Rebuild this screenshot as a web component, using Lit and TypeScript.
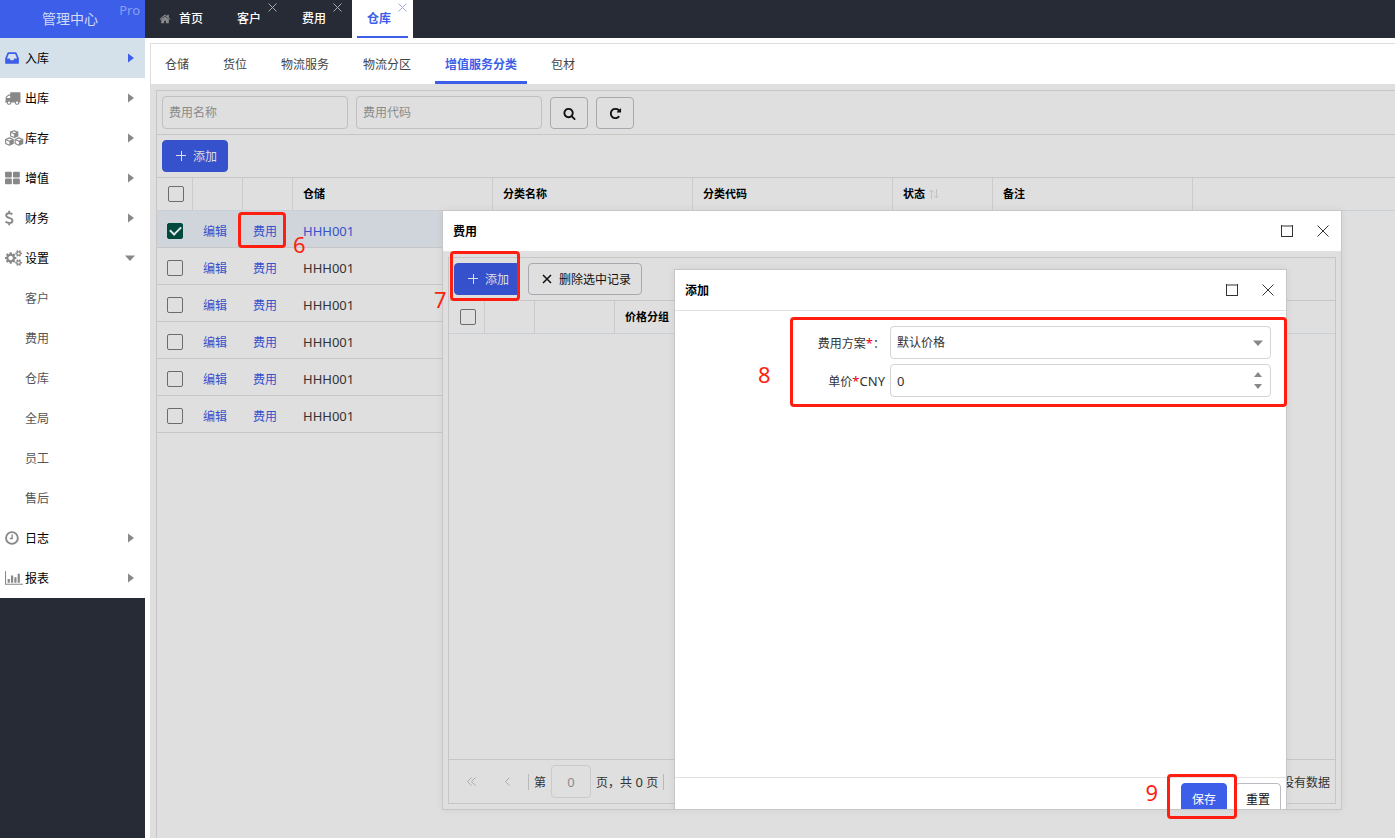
import { LitElement, html, css, svg, nothing } from "lit";
import { customElement } from "lit/decorators.js";
import { classMap } from "lit/directives/class-map.js";

const fa = (d: string, w = 1792) => ({ w, body: svg`<path d=${d} />` });

const ICONS: Record<string, { w: number; x?: number; body: unknown }> = {
  home: fa("M1472 992v480q0 26-19 45t-45 19h-384v-384h-256v384h-384q-26 0-45-19t-19-45v-480q0-1 .5-3t.5-3l575-474 575 474q1 2 1 6zm223-69l-62 74q-8 9-21 11h-3q-13 0-21-7l-692-577-692 577q-12 8-24 7-13-2-21-11l-62-74q-8-10-7-23.5t11-21.5l719-599q32-26 76-26t76 26l244 204v-195q0-14 9-23t23-9h192q14 0 23 9t9 23v408l219 182q10 8 11 21.5t-7 23.5z"),
  inbox: { ...fa("M1151 960h316q-1-3-2.5-8t-2.5-8l-212-496h-708l-212 496q-1 2-2.5 8t-2.5 8h316l95 192h320zm513 30v482q0 26-19 45t-45 19h-1408q-26 0-45-19t-19-45v-482q0-62 25-123l238-552q10-25 36.5-42t52.5-17h832q26 0 52.5 17t36.5 42l238 552q25 61 25 123z"), x: 110 },
  truck: { ...fa("M640 1408q0-52-38-90t-90-38-90 38-38 90 38 90 90 38 90-38 38-90zm-384-512h384v-256h-158q-13 0-22 9l-195 195q-9 9-9 22v30zm1280 512q0-52-38-90t-90-38-90 38-38 90 38 90 90 38 90-38 38-90zm256-1088v1024q0 15-4 26.5t-13.5 18.5-16.5 11.5-23.5 6-22.5 2-25.5 0-22.5-.5q0 106-75 181t-181 75-181-75-75-181h-384q0 106-75 181t-181 75-181-75-75-181h-64q-3 0-22.5.5t-25.5 0-22.5-2-23.5-6-16.5-11.5-13.5-18.5-4-26.5q0-26 19-45t45-19v-320q0-8-.5-35t0-38 2.5-34.5 6.5-37 14-30.5 22.5-30l198-198q19-19 50.5-32t58.5-13h160v-192q0-26 19-45t45-19h1024q26 0 45 19t19 45z"), x: 60 },
  cubes: {
    w: 2160,
    x: 110,
    body: svg`<g stroke="currentColor" stroke-width="130" stroke-linejoin="round" fill="none">
      <path d="M1152 70l410 160v430l-410 190-410-190V230z"/>
      <path d="M610 880l430 180v450l-430 210-430-210v-450z"/>
      <path d="M1694 880l430 180v450l-430 210-430-210v-450z"/></g>
      <path d="M1152 430l410-200v430l-410 190zM610 1260l430-200v450l-430 210zM1694 1260l430-200v450l-430 210z"/>
      <path d="M742 230l410 190 410-190M180 1060l430 190 430-190M1264 1060l430 190 430-190" fill="none" stroke="currentColor" stroke-width="120"/>`,
  },
  grid: {
    w: 1792,
    x: 64,
    body: svg`<rect x="64" y="192" width="768" height="640" rx="110"/><rect x="960" y="192" width="768" height="640" rx="110"/><rect x="64" y="960" width="768" height="640" rx="110"/><rect x="960" y="960" width="768" height="640" rx="110"/>`,
  },
  dollar: {
    w: 1152,
    x: 110,
    body: svg`<path d="M960 480C860 390 720 350 590 350c-200 0-340 90-340 245 0 180 160 235 350 290 210 60 370 130 370 320 0 170-150 270-370 270-170 0-320-70-430-180M590 60v290M590 1475v260" fill="none" stroke="currentColor" stroke-width="215"/>`,
  },
  cogs: fa("M896 896q0-106-75-181t-181-75-181 75-75 181 75 181 181 75 181-75 75-181zm768 512q0-52-38-90t-90-38-90 38-38 90q0 53 37.5 90.5t90.5 37.5 90.5-37.5 37.5-90.5zm0-1024q0-52-38-90t-90-38-90 38-38 90q0 53 37.5 90.5t90.5 37.5 90.5-37.5 37.5-90.5zm-384 421v185q0 10-7 19.5t-16 10.5l-155 24q-11 35-32 76 34 48 90 115 7 11 7 20 0 12-7 19-23 30-82.5 89.5t-78.5 59.5q-11 0-21-7l-115-90q-37 19-77 31-11 108-23 155-7 24-30 24h-186q-11 0-20-7.5t-10-17.5l-23-153q-34-10-75-31l-118 89q-7 7-20 7-11 0-21-8-144-133-144-160 0-9 7-19 10-14 41-53t47-61q-23-44-35-82l-152-24q-10-1-17-9.5t-7-19.5v-185q0-10 7-19.5t16-10.5l155-24q11-35 32-76-34-48-90-115-7-11-7-20 0-12 7-20 22-30 82-89t79-59q11 0 21 7l115 90q34-18 77-32 11-108 23-154 7-24 30-24h186q11 0 20 7.5t10 17.5l23 153q34 10 75 31l118-89q8-7 20-7 11 0 21 8 144 133 144 160 0 8-7 19-12 16-42 54t-45 60q23 48 34 82l152 23q10 2 17 10.5t7 19.5zm640 533v140q0 16-149 31-12 27-30 52 51 113 51 138 0 4-4 7-122 71-124 71-8 0-46-47t-52-68q-20 2-30 2t-30-2q-14 21-52 68t-46 47q-2 0-124-71-4-3-4-7 0-25 51-138-18-25-30-52-149-15-149-31v-140q0-16 149-31 13-29 30-52-51-113-51-138 0-4 4-7 4-2 35-20t59-34 30-16q8 0 46 46.5t52 67.5q20-2 30-2t30 2q51-71 92-112l6-2q4 0 124 70 4 3 4 7 0 25-51 138 17 23 30 52 149 15 149 31zm0-1024v140q0 16-149 31-12 27-30 52 51 113 51 138 0 4-4 7-122 71-124 71-8 0-46-47t-52-68q-20 2-30 2t-30-2q-14 21-52 68t-46 47q-2 0-124-71-4-3-4-7 0-25 51-138-18-25-30-52-149-15-149-31v-140q0-16 149-31 13-29 30-52-51-113-51-138 0-4 4-7 4-2 35-20t59-34 30-16q8 0 46 46.5t52 67.5q20-2 30-2t30 2q51-71 92-112l6-2q4 0 124 70 4 3 4 7 0 25-51 138 17 23 30 52 149 15 149 31z", 1920),
  clock: {
    w: 1664,
    x: 64,
    body: svg`<g fill="none" stroke="currentColor"><circle cx="832" cy="896" r="660" stroke-width="215"/><path d="M860 500v450H600" stroke-width="150"/></g>`,
  },
  chart: {
    w: 2048,
    body: svg`<path d="M0 128h120v1430h1928v120H0zM300 1000h250v440H300zM680 620h250v820H680zM1060 800h250v640h-250zM1440 400h250v1040h-250z"/>`,
  },
  search: fa("M1216 832q0-185-131.5-316.5t-316.5-131.5-316.5 131.5-131.5 316.5 131.5 316.5 316.5 131.5 316.5-131.5 131.5-316.5zm512 832q0 52-38 90t-90 38q-54 0-90-38l-343-342q-179 124-399 124-143 0-273.5-55.5t-225-150-150-225-55.5-273.5 55.5-273.5 150-225 225-150 273.5-55.5 273.5 55.5 225 150 150 225 55.5 273.5q0 220-124 399l343 343q37 37 37 90z"),
  repeat: fa("M1664 256v448q0 26-19 45t-45 19h-448q-42 0-59-40-17-39 14-69l138-138q-148-137-349-137-104 0-198.5 40.5t-163.5 109.5-109.5 163.5-40.5 198.5 40.5 198.5 109.5 163.5 163.5 109.5 198.5 40.5q119 0 225-52t179-147q7-10 23-12 15 0 25 9l137 138q9 8 9.5 20.5t-7.5 22.5q-109 132-264 204.5t-327 72.5q-156 0-298-61t-245-164-164-245-61-298 61-298 164-245 245-164 298-61q147 0 284.5 55.5t244.5 156.5l130-129q29-31 70-14 39 17 39 59z"),
};

const icon = (name: string, size: number) => {
  const i = ICONS[name];
  return html`<svg
    class="icon"
    viewBox="${i.x ?? 0} 0 ${i.w} 1792"
    width=${Math.round((size * i.w) / 1792)}
    height=${size}
    fill="currentColor"
    aria-hidden="true"
  >${i.body}</svg>`;
};

const line = (d: string, size: number, width = 1) => html`<svg
  class="icon"
  viewBox="0 0 ${size} ${size}"
  width=${size}
  height=${size}
  fill="none"
  stroke="currentColor"
  stroke-width=${width}
  aria-hidden="true"
><path d=${d} /></svg>`;

const cross = (size: number, width = 1) =>
  line(`M.5 .5L${size - 0.5} ${size - 0.5}M${size - 0.5} .5L.5 ${size - 0.5}`, size, width);
const plus = () => line("M5.5 0V10M0 4.5H10", 10);
const square = () => line("M0 1H12M.5 0V12M11.5 0V12M0 11.5H12", 12);

const NAV = [
  { label: "入库", icon: "inbox", active: true },
  { label: "出库", icon: "truck" },
  { label: "库存", icon: "cubes" },
  { label: "增值", icon: "grid" },
  { label: "财务", icon: "dollar" },
  { label: "设置", icon: "cogs", children: ["客户", "费用", "仓库", "全局", "员工", "售后"] },
  { label: "日志", icon: "clock" },
  { label: "报表", icon: "chart" },
];
const TABS = ["客户", "费用", "仓库"];
const SUBTABS = ["仓储", "货位", "物流服务", "物流分区", "增值服务分类", "包材"];
const ROWS = ["HHH001", "HHH001", "HHH001", "HHH001", "HHH001", "HHH001"];

@customElement("app-root")
export class AppRoot extends LitElement {
  static styles = css`
    :host {
      display: flex;
      min-height: 100vh;
      position: relative;
      overflow: hidden;
      background: #fff;
      color: #333;
      font: 12px/20px "Noto Sans", "Noto Sans CJK SC", sans-serif;
    }
    * { box-sizing: border-box; }
    a { color: inherit; text-decoration: none; }
    button, input, select { font: inherit; color: inherit; margin: 0; }
    button { padding: 0; border: 0; background: none; display: inline-flex; align-items: center; justify-content: center; }
    .icon { display: block; flex: none; }

    .side { flex: 0 0 145px; background: #262b36; }
    .brand {
      height: 38px; background: #3c5ee8; color: #d3dbf9; position: relative;
      display: flex; align-items: center; padding-left: 42px; font-size: 14px;
    }
    .pro { position: absolute; top: 0; right: 5px; font-size: 13px; color: #8b9ff1; }
    .nav { background: #fff; }
    .nav-item {
      height: 40px; display: grid; grid-template-columns: 20px 1fr 10px; align-items: center;
      padding: 0 10px 0 5px; color: #000;
    }
    .nav-item span { padding-top: 2px; }
    .nav-item .icon { color: #888; }
    .nav-item .icon:last-child { justify-self: end; }
    .nav-item.active { background: #d5e1ea; }
    .nav-item.active .icon { color: #3c5ee8; }
    .nav-sub { height: 40px; display: flex; align-items: center; padding: 2px 0 0 25px; color: #555; }

    .main { flex: 1; min-width: 0; display: flex; flex-direction: column; }
    .tabs { height: 38px; background: #262b36; display: flex; color: #fff; font-weight: 500; }
    .tab { position: relative; display: flex; align-items: center; padding: 0 22px 0 15px; margin-right: 4px; }
    .tab.home { padding: 0 15px 0 14px; gap: 8px; }
    .tab.home .icon { color: #888; }
    .tab.active { background: #fff; color: #3c5ee8; font-weight: 700; }
    .tab.active::after { content: ""; position: absolute; left: 5px; right: 5px; bottom: 0; height: 2px; background: #3c5ee8; }
    .tab-close { position: absolute; top: 3px; right: 6px; color: #aaa; }
    .tab.active .tab-close { color: #a3a5ea; }

    .page { flex: 1; margin: 5px 0 0 5px; border: solid #ddd; border-width: 1px 0 0 1px; display: flex; flex-direction: column; }
    .subtabs { height: 40px; display: flex; gap: 14px; padding-left: 4px; color: #444; }
    .subtab { display: flex; align-items: center; padding: 2px 10px 0; border: solid transparent; border-width: 3px 0; }
    .subtab.active { color: #3c5ee8; font-weight: 700; border-bottom-color: #3c5ee8; }
    .content { flex: 1; background: #dfdfdf; padding: 6px 0 0 5px; display: flex; }
    .panel { flex: 1; min-width: 0; position: relative; border: solid #c6c6c6; border-width: 1px 0 0 1px; }
    .toolbar { display: flex; align-items: flex-end; gap: 8px; padding: 5px; border-bottom: 1px solid #c6c6c6; }
    .filter {
      width: 186px; height: 33px; border: 1px solid #c0c0c0; border-radius: 4px; background: none; padding: 0 6px; outline: 0;
    }
    .filter::placeholder { color: #8b8b8b; opacity: 1; }
    .btn { height: 32px; border: 1px solid #a7a9ae; border-radius: 4px; color: #111; gap: 7px; padding: 0 10px 0 13px; }
    .btn span { padding-top: 2px; }
    .btn.tool { width: 38px; padding: 0; }
    .btn.add { background: #3551cb; border-color: #3551cb; color: #dfdfdf; }
    .btn.save, .btn.reset { padding: 0 10px; }
    .btn.save { background: #3c5ee8; border-color: #3c5ee8; color: #fff; }
    .btn.reset { background: #fff; border-color: #b9bcc2; }

    table { width: 100%; table-layout: fixed; border-collapse: separate; border-spacing: 0; }
    th { height: 33px; padding: 0 10px; text-align: left; font-size: 11px; color: #000; border: solid #cbcbcb; border-width: 0 1px 1px 0; border-bottom-color: #c9d0d7; }
    th:first-child { padding-left: 11px; }
    th:last-child { border-right: 0; }
    td { height: 37px; padding: 4px 10px 0; border-bottom: 1px solid #c6c6c6; font-size: 13px; }
    td a { font-size: 12px; color: #3651cb; }
    tr.selected td { background: #cfd5da; color: #3651cb; }
    td.rest, tr.selected td.rest { border: 0; background: none; }
    .w36 { width: 36px; } .w50 { width: 50px; } .w80 { width: 80px; } .w100 { width: 100px; } .w200 { width: 200px; }
    .check {
      appearance: none; width: 16px; height: 16px; border: 1px solid #6c6c6c; border-radius: 2px;
      display: grid; place-items: center;
    }
    .check:checked { background: #00493f; border-color: #00493f; }
    .check:checked::after {
      content: ""; width: 9px; height: 5px; border: solid #e2e8e6; border-width: 0 0 2px 2px; transform: rotate(-45deg); margin-bottom: 3px;
    }
    .sortable { display: flex; align-items: center; gap: 4px; }
    .sortable .icon { color: #c2c2c2; }

    .window { position: absolute; border: 1px solid #c6c6c6; box-shadow: 0 0 8px rgba(0, 0, 0, 0.06); display: flex; flex-direction: column; }
    .fee { left: 442px; right: 53px; top: 210px; height: 600px; }
    .create { left: 231px; right: 54px; top: 58px; bottom: -12px; background: #fff; }
    .viewport { flex: 1; position: relative; overflow: hidden; display: flex; flex-direction: column; background: #dfdfdf; }
    .title {
      height: 41px; flex: none; background: #fff; border-bottom: 1px solid #e2e2e2; display: flex; align-items: center;
      padding: 0 12px 0 10px; gap: 24px; color: #333;
    }
    .title h2 { flex: 1; margin: 0; padding-top: 2px; font-size: 12px; line-height: 20px; color: #000; }
    .inner { flex: 1; margin: 5px; border: 1px solid #c6c6c6; display: flex; flex-direction: column; }
    .empty { flex: 1; }
    .pager { height: 44px; border-top: 1px solid #c6c6c6; display: flex; align-items: center; gap: 5px; padding: 0 5px 0 7px; }
    .pager > span:not(.bar) { padding-top: 2px; }
    .pager .icon { color: #aaa; }
    .step { width: 31px; height: 32px; }
    .bar { width: 1px; height: 16px; background: #b9b9b9; }
    .pageno { width: 40px; height: 33px; border: 1px solid #cacaca; border-radius: 4px; background: none; text-align: center; font-size: 13px; color: #8c8c8c; }
    .summary { margin-left: auto; }

    .form { flex: 1; padding: 15px; display: flex; flex-direction: column; gap: 5px; }
    .field { display: grid; grid-template-columns: 195px 1fr; column-gap: 5px; align-items: center; }
    .field label { text-align: right; padding-top: 2px; }
    .latin { font-size: 13px; }
    .req { color: #e8001c; font-size: 13px; }
    .control { position: relative; display: grid; align-items: center; }
    .control select, .control input {
      appearance: none; width: 100%; height: 33px; border: 1px solid #d3d4d8; border-radius: 4px; background: #fff; padding: 0 6px; outline: 0;
    }
    .control input { appearance: textfield; font-size: 13px; }
    .control input::-webkit-inner-spin-button { appearance: none; }
    .arrows { position: absolute; right: 8px; display: grid; gap: 7px; color: #888; pointer-events: none; }
    .foot { border-top: 1px solid #e2e2e2; padding: 5px; display: flex; justify-content: flex-end; gap: 8px; }

    .mark { position: absolute; border: 3px solid #ff1e10; border-radius: 4px; pointer-events: none; }
    .num { position: absolute; font-size: 22px; line-height: 22px; color: #ff1e10; pointer-events: none; }
    .m6 { left: 81px; top: 121px; width: 48px; height: 36px; }
    .n6 { left: 136px; top: 142px; }
    .m7 { left: 7px; top: 40px; width: 70px; height: 50px; }
    .n7 { left: -9px; top: 77px; }
    .m8 { left: 347px; right: 54px; top: 106px; height: 90px; }
    .n8 { left: 315px; top: 152px; }
    .m9 { right: 104px; top: 563px; width: 70px; height: 45px; }
    .n9 { right: 183px; top: 570px; }
  `;

  private caret(down: boolean) {
    return down
      ? html`<svg class="icon" width="10" height="6" viewBox="0 0 10 6" fill="currentColor"><path d="M0 .5h10L5 6z" /></svg>`
      : html`<svg class="icon" width="7" height="10" viewBox="0 0 7 10" fill="currentColor"><path d="M0 .5v9L6 5z" /></svg>`;
  }

  private nav() {
    return html`<aside class="side">
      <div class="brand">管理中心<span class="pro">Pro</span></div>
      <nav class="nav">
        ${NAV.map(
          (n) => html`<a href="#" class=${classMap({ "nav-item": true, active: !!n.active })}>
              ${icon(n.icon, 16)}<span>${n.label}</span>${this.caret(!!n.children)}
            </a>
            ${n.children ? n.children.map((c) => html`<a href="#" class="nav-sub">${c}</a>`) : nothing}`
        )}
      </nav>
    </aside>`;
  }

  private list() {
    return html`<section class="panel">
      <div class="toolbar">
        <input class="filter" type="text" placeholder="费用名称" aria-label="费用名称" />
        <input class="filter" type="text" placeholder="费用代码" aria-label="费用代码" />
        <button class="btn tool" aria-label="搜索">${icon("search", 13)}</button>
        <button class="btn tool" aria-label="刷新">${icon("repeat", 13)}</button>
      </div>
      <div class="toolbar"><button class="btn add">${plus()}<span>添加</span></button></div>
      <table>
        <thead>
          <tr>
            <th class="w36"><input class="check" type="checkbox" aria-label="全选" /></th>
            <th class="w50"></th>
            <th class="w50"></th>
            <th class="w200">仓储</th>
            <th class="w200">分类名称</th>
            <th class="w200">分类代码</th>
            <th class="w100"><span class="sortable">状态${line("M2.5 10V1M0 3.5L2.5 1 5 3.5M7.5 0V9M5 6.5L7.5 9 10 6.5", 10)}</span></th>
            <th class="w200">备注</th>
            <th></th>
          </tr>
        </thead>
        <tbody>
          ${ROWS.map(
            (r, i) => html`<tr class=${i === 0 ? "selected" : ""}>
              <td><input class="check" type="checkbox" aria-label="选择" ?checked=${i === 0} /></td>
              <td><a href="#">编辑</a></td>
              <td><a href="#">费用</a></td>
              <td>${r}</td>
              <td colspan="4"></td>
              <td class="rest"></td>
            </tr>`
          )}
        </tbody>
      </table>
      <div class="mark m6"></div>
      <div class="num n6">6</div>
    </section>`;
  }

  private title(text: string) {
    return html`<header class="title">
      <h2>${text}</h2>
      <button aria-label="最大化">${square()}</button>
      <button aria-label="关闭">${cross(12)}</button>
    </header>`;
  }

  private createWindow() {
    return html`<section class="window create">
      ${this.title("添加")}
      <form class="form">
        <div class="field">
          <label for="plan">费用方案<span class="req">*</span>：</label>
          <div class="control">
            <select id="plan"><option>默认价格</option></select>
            <span class="arrows">${this.caret(true)}</span>
          </div>
        </div>
        <div class="field">
          <label for="price">单价<span class="req">*</span><span class="latin">CNY</span></label>
          <div class="control">
            <input id="price" type="number" value="0" />
            <span class="arrows">
              <svg class="icon" width="10" height="5" viewBox="0 0 10 5" fill="currentColor"><path d="M1 5h8L5 0z" /></svg>
              <svg class="icon" width="10" height="5" viewBox="0 0 10 5" fill="currentColor"><path d="M1 0h8L5 5z" /></svg>
            </span>
          </div>
        </div>
      </form>
      <footer class="foot">
        <button class="btn save"><span>保存</span></button>
        <button class="btn reset"><span>重置</span></button>
      </footer>
    </section>`;
  }

  private feeWindow() {
    return html`<section class="window fee">
      <div class="viewport">
        ${this.title("费用")}
        <div class="inner">
          <div class="toolbar">
            <button class="btn add">${plus()}<span>添加</span></button>
            <button class="btn">${line("M1 1L9 9M9 1L1 9", 10, 1.5)}<span>删除选中记录</span></button>
          </div>
          <table>
            <thead>
              <tr>
                <th class="w36"><input class="check" type="checkbox" aria-label="全选" /></th>
                <th class="w50"></th>
                <th class="w80"></th>
                <th>价格分组</th>
              </tr>
            </thead>
          </table>
          <div class="empty"></div>
          <div class="pager">
            <button class="step" aria-label="首页">${line("M4.5 .5L.5 4.5L4.5 8.5M8.5 .5L4.5 4.5L8.5 8.5", 9)}</button>
            <button class="step" aria-label="上一页">${line("M6.5 .5L2.5 4.5L6.5 8.5", 9)}</button>
            <span class="bar"></span>
            <span>第</span>
            <input class="pageno" type="text" value="0" aria-label="页码" />
            <span>页，共<span class="latin"> 0 </span>页</span>
            <span class="bar"></span>
            <span class="summary">没有数据</span>
          </div>
        </div>
        ${this.createWindow()}
      </div>
      <div class="mark m7"></div>
      <div class="num n7">7</div>
      <div class="mark m8"></div>
      <div class="num n8">8</div>
      <div class="mark m9"></div>
      <div class="num n9">9</div>
    </section>`;
  }

  render() {
    return html`${this.nav()}
      <main class="main">
        <nav class="tabs">
          <a href="#" class="tab home">${icon("home", 12)}首页</a>
          ${TABS.map(
            (t, i) => html`<div class=${classMap({ tab: true, active: i === 2 })}>
              <a href="#">${t}</a><button class="tab-close" aria-label="关闭">${cross(9)}</button>
            </div>`
          )}
        </nav>
        <div class="page">
          <nav class="subtabs">
            ${SUBTABS.map((t, i) => html`<a href="#" class=${classMap({ subtab: true, active: i === 4 })}>${t}</a>`)}
          </nav>
          <div class="content">${this.list()}</div>
        </div>
      </main>
      ${this.feeWindow()}`;
  }
}
